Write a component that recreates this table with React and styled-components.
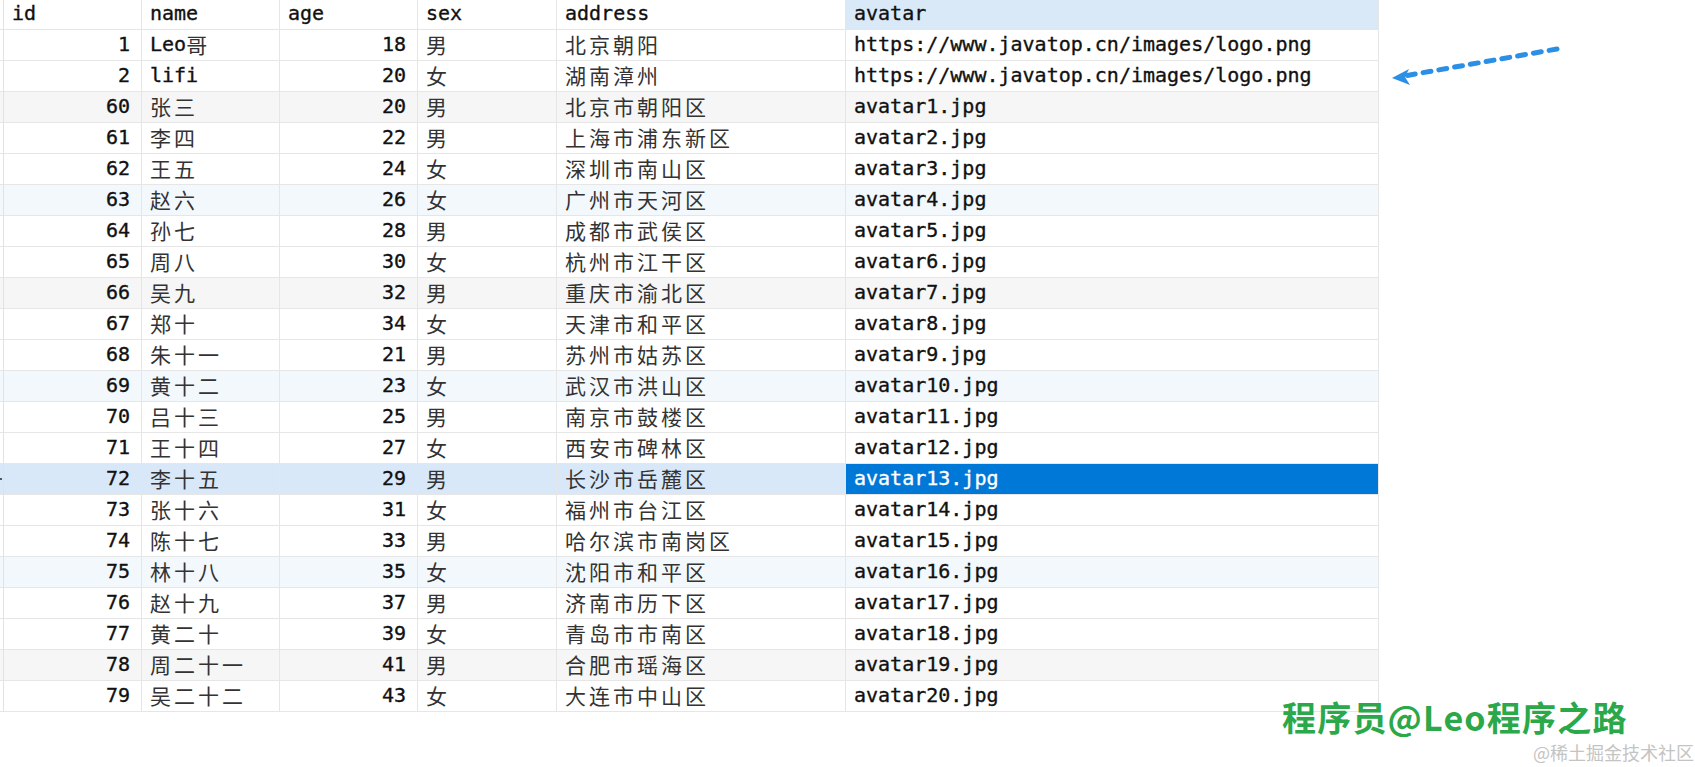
import React from "react";
import styled, { createGlobalStyle, css } from "styled-components";

const GlobalStyle = createGlobalStyle`
  html, body {
    margin: 0;
    padding: 0;
    background: #ffffff;
  }
  body {
    font-family: "DejaVu Sans Mono", "Liberation Mono", monospace;
  }
`;

const COLUMNS = "4px 138px 138px 138px 139px 289px 533px";
const CJK = /[\u3000-\u9fff\uff00-\uffef]/;

const rows = [
  [1, "Leo哥", 18, "男", "北京朝阳", "https://www.javatop.cn/images/logo.png"],
  [2, "lifi", 20, "女", "湖南漳州", "https://www.javatop.cn/images/logo.png"],
  [60, "张三", 20, "男", "北京市朝阳区", "avatar1.jpg"],
  [61, "李四", 22, "男", "上海市浦东新区", "avatar2.jpg"],
  [62, "王五", 24, "女", "深圳市南山区", "avatar3.jpg"],
  [63, "赵六", 26, "女", "广州市天河区", "avatar4.jpg"],
  [64, "孙七", 28, "男", "成都市武侯区", "avatar5.jpg"],
  [65, "周八", 30, "女", "杭州市江干区", "avatar6.jpg"],
  [66, "吴九", 32, "男", "重庆市渝北区", "avatar7.jpg"],
  [67, "郑十", 34, "女", "天津市和平区", "avatar8.jpg"],
  [68, "朱十一", 21, "男", "苏州市姑苏区", "avatar9.jpg"],
  [69, "黄十二", 23, "女", "武汉市洪山区", "avatar10.jpg"],
  [70, "吕十三", 25, "男", "南京市鼓楼区", "avatar11.jpg"],
  [71, "王十四", 27, "女", "西安市碑林区", "avatar12.jpg"],
  [72, "李十五", 29, "男", "长沙市岳麓区", "avatar13.jpg"],
  [73, "张十六", 31, "女", "福州市台江区", "avatar14.jpg"],
  [74, "陈十七", 33, "男", "哈尔滨市南岗区", "avatar15.jpg"],
  [75, "林十八", 35, "女", "沈阳市和平区", "avatar16.jpg"],
  [76, "赵十九", 37, "男", "济南市历下区", "avatar17.jpg"],
  [77, "黄二十", 39, "女", "青岛市市南区", "avatar18.jpg"],
  [78, "周二十一", 41, "男", "合肥市瑶海区", "avatar19.jpg"],
  [79, "吴二十二", 43, "女", "大连市中山区", "avatar20.jpg"],
];

const SELECTED = 14;
const tints = { 2: "gray", 8: "gray", 20: "gray", 5: "blue", 11: "blue", 17: "blue" };

const Page = styled.div`
  position: relative;
  width: 1695px;
  height: 767px;
  overflow: hidden;
  background: #fff;
`;

const Grid = styled.div`
  display: flex;
  flex-direction: column;
  width: 1379px;
`;

const Row = styled.div`
  display: grid;
  grid-template-columns: ${COLUMNS};
  height: ${(p) => (p.$header ? 30 : 31)}px;
  background: ${(p) =>
    p.$tint === "gray" ? "#f6f6f6" : p.$tint === "blue" ? "#f3f8fd" : p.$tint === "sel" ? "#d9e8f8" : "#fff"};
`;

const Cell = styled.div`
  box-sizing: border-box;
  border-right: 1px solid #e6e6e6;
  border-bottom: 1px solid #e6e6e6;
  display: flex;
  align-items: center;
  justify-content: ${(p) => (p.$right ? "flex-end" : "flex-start")};
  padding: ${(p) => (p.$right ? "0 11px 3px 0" : "0 0 3px 8px")};
  font-size: 20px;
  color: #111;
  -webkit-text-stroke: 0.35px #111;
  white-space: nowrap;
  overflow: hidden;
  ${(p) =>
    p.$lit &&
    css`
      background: #dae9f8;
    `}
  ${(p) =>
    p.$active &&
    css`
      background: #0078d7;
      color: #fff;
      -webkit-text-stroke: 0.35px #fff;
    `}
`;

const Gutter = styled.div`
  position: relative;
  box-sizing: border-box;
  border-right: 1px solid #e2e2e2;
  border-bottom: 1px solid #e6e6e6;
`;

const Marker = styled.span`
  position: absolute;
  left: 0;
  top: 14px;
  width: 2px;
  height: 2px;
  background: #555;
`;

const Han = styled.span`
  font-family: "Noto Sans CJK SC", sans-serif;
  font-size: 21px;
  letter-spacing: 3px;
  color: #333;
  -webkit-text-stroke: 0;
`;

const Watermark = styled.div`
  position: absolute;
  left: 1282px;
  top: 700px;
  font-family: "Noto Sans CJK SC", "Noto Sans", sans-serif;
  font-size: 34px;
  font-weight: 700;
  letter-spacing: 1.2px;
  line-height: 1;
  color: #2aa84a;
  white-space: nowrap;
`;

const Credit = styled.div`
  position: absolute;
  left: 1533px;
  top: 743px;
  font-family: "Noto Sans CJK SC", sans-serif;
  font-size: 18px;
  line-height: 1;
  color: #c4c4c4;
  white-space: nowrap;
`;

const ArrowSvg = styled.svg`
  position: absolute;
  left: 1380px;
  top: 36px;
`;

function Text({ value }) {
  const str = String(value);
  const parts = [];
  let buf = "";
  let isHan = null;
  for (const ch of str) {
    const h = CJK.test(ch);
    if (isHan !== null && h !== isHan) {
      parts.push([isHan, buf]);
      buf = "";
    }
    isHan = h;
    buf += ch;
  }
  if (buf) parts.push([isHan, buf]);
  return parts.map(([h, s], i) => (h ? <Han key={i}>{s}</Han> : <span key={i}>{s}</span>));
}

function Arrow() {
  return (
    <ArrowSvg width="190" height="60" viewBox="0 0 190 60">
      <path
        d="M177 13 L24 40"
        stroke="#2b8fe6"
        strokeWidth="5"
        strokeLinecap="round"
        strokeDasharray="8 8"
        fill="none"
      />
      <path d="M12 42 L29 33 L25 41 L30 49 Z" fill="#2b8fe6" />
    </ArrowSvg>
  );
}

export default function App() {
  const headers = ["id", "name", "age", "sex", "address", "avatar"];
  return (
    <>
      <GlobalStyle />
      <Page>
        <Grid>
          <Row $header>
            <Gutter />
            {headers.map((h) => (
              <Cell key={h} $lit={h === "avatar"}>
                {h}
              </Cell>
            ))}
          </Row>
          {rows.map((r, i) => {
            const sel = i === SELECTED;
            return (
              <Row key={r[0]} $tint={sel ? "sel" : tints[i]}>
                <Gutter>{sel && <Marker />}</Gutter>
                <Cell $right>{r[0]}</Cell>
                <Cell>
                  <Text value={r[1]} />
                </Cell>
                <Cell $right>{r[2]}</Cell>
                <Cell>
                  <Text value={r[3]} />
                </Cell>
                <Cell>
                  <Text value={r[4]} />
                </Cell>
                <Cell $active={sel}>{r[5]}</Cell>
              </Row>
            );
          })}
        </Grid>
        <Arrow />
        <Watermark>程序员@Leo程序之路</Watermark>
        <Credit>@稀土掘金技术社区</Credit>
      </Page>
    </>
  );
}
